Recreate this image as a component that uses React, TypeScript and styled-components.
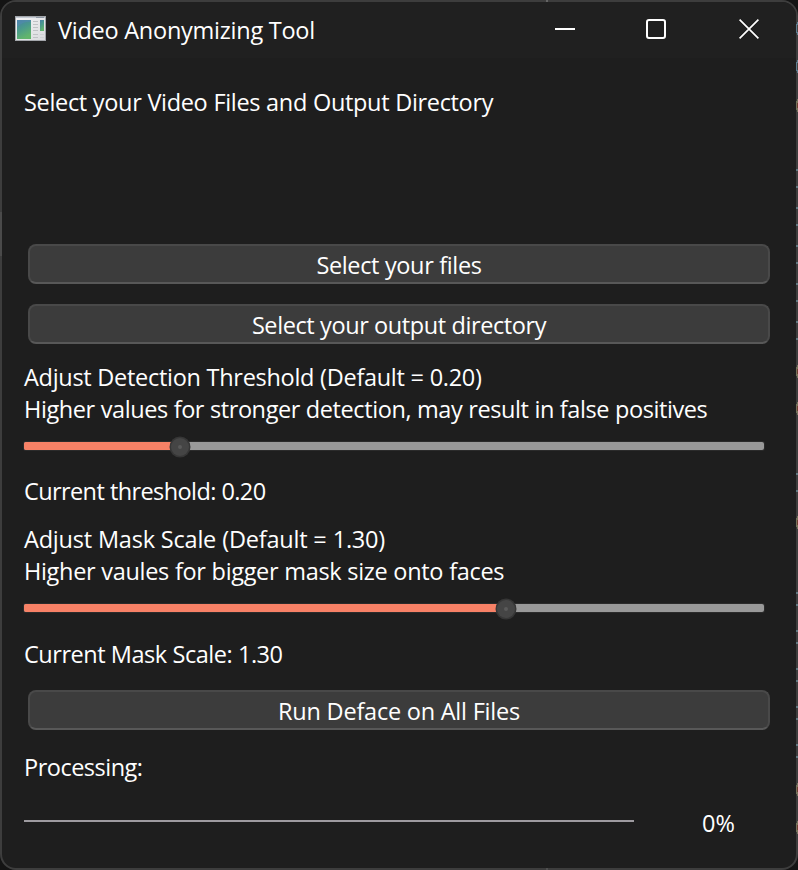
import React from 'react';
import styled, { createGlobalStyle } from 'styled-components';

const GlobalStyle = createGlobalStyle`
  * { box-sizing: border-box; }
  body { margin: 0; background: #141414; overflow: hidden; }
`;

const Desktop = styled.div`
  position: relative;
  width: 798px;
  height: 870px;
  background: #141414;
  font-family: "Segoe UI", "Open Sans", "Noto Sans", sans-serif;
  font-size: 23.5px;
  line-height: 32px;
  color: #fff;
`;

const Window = styled.main`
  display: flex;
  flex-direction: column;
  width: 798px;
  height: 870px;
  border: 2px solid #3d3d3d;
  border-radius: 16px;
  background: #1e1e1e;
  overflow: hidden;
`;

const TitleBar = styled.header`
  display: flex;
  flex: none;
  height: 56px;
  padding-left: 13px;
  background: #202020;
`;

const AppIcon = styled.svg`
  flex: none;
  width: 31px;
  height: 25px;
  margin-top: 14px;
`;

const Title = styled.h1`
  flex: 1;
  margin: 12px 0 0 12px;
  font-size: inherit;
  font-weight: 400;
  letter-spacing: -0.25px;
  white-space: nowrap;
`;

const Controls = styled.div`
  display: flex;
`;

const ControlButton = styled.button<{ $width: number }>`
  display: flex;
  justify-content: center;
  align-items: flex-start;
  width: ${({ $width }) => $width}px;
  height: 56px;
  padding: 17px 0 0;
  border: 0;
  background: transparent;
  color: #fff;
`;

const Content = styled.section`
  display: flex;
  flex-direction: column;
  padding: 28px 32px 0 22px;
`;

const Label = styled.p<{ $tracking: number; $gap?: number }>`
  height: 32px;
  margin: 0 0 ${({ $gap = 0 }) => $gap}px;
  letter-spacing: ${({ $tracking }) => $tracking}px;
  word-spacing: 0.2px;
  white-space: nowrap;
`;

const PushButton = styled.button<{ $tracking: number; $gap: number }>`
  flex: none;
  width: 742px;
  height: 40px;
  margin: 0 0 ${({ $gap }) => $gap}px 4px;
  padding: 1px 0 0;
  border: 2px solid #494949;
  border-bottom-color: #585858;
  border-radius: 8px;
  background: #3c3c3c;
  color: #fff;
  font: inherit;
  line-height: 34px;
  letter-spacing: ${({ $tracking }) => $tracking}px;
`;

const SliderTrack = styled.div<{ $gap: number }>`
  display: flex;
  align-items: center;
  flex: none;
  width: 740px;
  height: 8px;
  margin-bottom: ${({ $gap }) => $gap}px;
  border-radius: 2px;
  background: #999;
  box-shadow: 0 0 0 1px #2b2b2b;
`;

const SliderFill = styled.div<{ $width: number }>`
  width: ${({ $width }) => $width}px;
  height: 8px;
  border-radius: 2px 0 0 2px;
  background: #f78166;
`;

const SliderThumb = styled.svg`
  flex: none;
  width: 22px;
  height: 22px;
  margin: 2px 0 0 -11px;
`;

const ProgressRow = styled.div`
  display: flex;
  height: 32px;
`;

const ProgressLine = styled.div`
  width: 610px;
  height: 2px;
  margin-top: 13px;
  background: #9e9ba0;
`;

const Percent = styled.span`
  margin-left: 68px;
`;

const EdgeMark = styled.i<{ $x: number; $y: number; $w: number; $h: number; $color: string }>`
  position: absolute;
  left: ${({ $x }) => $x}px;
  top: ${({ $y }) => $y}px;
  width: ${({ $w }) => $w}px;
  height: ${({ $h }) => $h}px;
  background: ${({ $color }) => $color};
`;

const ticks = [
  169, 186, 207, 224, 245, 262, 283, 300, 321, 338, 473, 490, 592, 604, 630, 642, 668, 680, 706,
  718, 744, 756,
];
const warmMarks = [99, 365, 402, 516, 783, 821];
const coolMarks = [22, 60];

function Slider({ fill, gap }: { fill: number; gap: number }) {
  return (
    <SliderTrack $gap={gap}>
      <SliderFill $width={fill} />
      <SliderThumb viewBox="0 0 22 22">
        <circle cx="11" cy="11" r="10.5" fill="#363636" />
        <circle cx="11" cy="11" r="9" fill="#454545" />
        <circle cx="11" cy="11" r="2" fill="#5a5a5a" />
      </SliderThumb>
    </SliderTrack>
  );
}

function WindowIcon() {
  return (
    <AppIcon viewBox="0 0 31 25">
      <defs>
        <linearGradient id="pane" x1="0" y1="0" x2="0.4" y2="1">
          <stop offset="0" stopColor="#467fa5" />
          <stop offset="0.5" stopColor="#4a9a8c" />
          <stop offset="1" stopColor="#62b56c" />
        </linearGradient>
        <linearGradient id="frame" x1="0" y1="0" x2="1" y2="1">
          <stop offset="0" stopColor="#f4f4f6" />
          <stop offset="1" stopColor="#d9dadd" />
        </linearGradient>
      </defs>
      <rect x="0.5" y="0.5" width="30" height="24" fill="url(#frame)" stroke="#a3a6ab" />
      <path d="M1 1.5h29" stroke="#c3cad3" />
      <path d="M21 1.5h8" stroke="#8e98a5" />
      <rect x="2" y="4" width="14" height="19" fill="url(#pane)" />
      <path d="M2 11q7-6 14-5V4H2z" fill="#5389b0" opacity="0.6" />
      <path d="M18 5.5h5M18 8.5h5M18 11.5h5M18 14.5h5M18 18.5h5M18 21.5h5" stroke="#bfc2c5" />
      <rect x="25" y="4" width="4" height="11" fill="url(#pane)" />
      <path d="M25 18.5h4M25 21.5h4" stroke="#cfd1d3" />
    </AppIcon>
  );
}

export default function App() {
  return (
    <Desktop>
      <GlobalStyle />
      <Window>
        <TitleBar>
          <WindowIcon />
          <Title>Video Anonymizing Tool</Title>
          <Controls>
            <ControlButton $width={90} aria-label="Minimize">
              <svg width="20" height="20" viewBox="0 0 20 20">
                <path d="M0 10h20" stroke="currentColor" strokeWidth="2" />
              </svg>
            </ControlButton>
            <ControlButton $width={92} aria-label="Maximize">
              <svg width="20" height="20" viewBox="0 0 20 20" fill="none">
                <rect x="1" y="1" width="18" height="18" rx="2" stroke="currentColor" strokeWidth="2" />
              </svg>
            </ControlButton>
            <ControlButton $width={94} aria-label="Close">
              <svg width="20" height="20" viewBox="0 0 20 20">
                <path d="M.6.6l18.8 18.8M19.4.6L.6 19.4" stroke="currentColor" strokeWidth="1.7" />
              </svg>
            </ControlButton>
          </Controls>
        </TitleBar>
        <Content>
          <Label $tracking={-0.33} $gap={126}>Select your Video Files and Output Directory</Label>
          <PushButton $tracking={-0.35} $gap={20}>Select your files</PushButton>
          <PushButton $tracking={-0.4} $gap={17}>Select your output directory</PushButton>
          <Label $tracking={-0.3}>Adjust Detection Threshold (Default = 0.20)</Label>
          <Label $tracking={-0.41} $gap={17}>
            Higher values for stronger detection, may result in false positives
          </Label>
          <Slider fill={156} gap={25} />
          <Label $tracking={-0.6} $gap={16}>Current threshold: 0.20</Label>
          <Label $tracking={-0.22}>Adjust Mask Scale (Default = 1.30)</Label>
          <Label $tracking={-0.32} $gap={17}>Higher vaules for bigger mask size onto faces</Label>
          <Slider fill={482} gap={26} />
          <Label $tracking={-0.48} $gap={20}>Current Mask Scale: 1.30</Label>
          <PushButton $tracking={-0.23} $gap={21}>Run Deface on All Files</PushButton>
          <Label $tracking={-0.5} $gap={24}>Processing:</Label>
          <ProgressRow>
            <ProgressLine />
            <Percent>0%</Percent>
          </ProgressRow>
        </Content>
      </Window>
      {ticks.map((y) => (
        <EdgeMark key={y} $x={796} $y={y} $w={2} $h={2} $color="#5f7780" />
      ))}
      {warmMarks.map((y) => (
        <React.Fragment key={y}>
          <EdgeMark $x={797} $y={y} $w={1} $h={13} $color="#77735c" />
          <EdgeMark $x={796} $y={y + 2} $w={1} $h={9} $color="#77735c" />
          <EdgeMark $x={797} $y={y + 4} $w={1} $h={5} $color="#6e3d30" />
        </React.Fragment>
      ))}
      {coolMarks.map((y) => (
        <React.Fragment key={y}>
          <EdgeMark $x={797} $y={y} $w={1} $h={13} $color="#5d7d90" />
          <EdgeMark $x={796} $y={y + 2} $w={1} $h={9} $color="#5d7d90" />
          <EdgeMark $x={797} $y={y + 3} $w={1} $h={7} $color="#4a4340" />
        </React.Fragment>
      ))}
      <EdgeMark $x={0} $y={212} $w={2} $h={44} $color="#4a4a4a" />
      <EdgeMark $x={546} $y={0} $w={2} $h={2} $color="#656565" />
      <EdgeMark $x={546} $y={868} $w={2} $h={2} $color="#505050" />
    </Desktop>
  );
}
